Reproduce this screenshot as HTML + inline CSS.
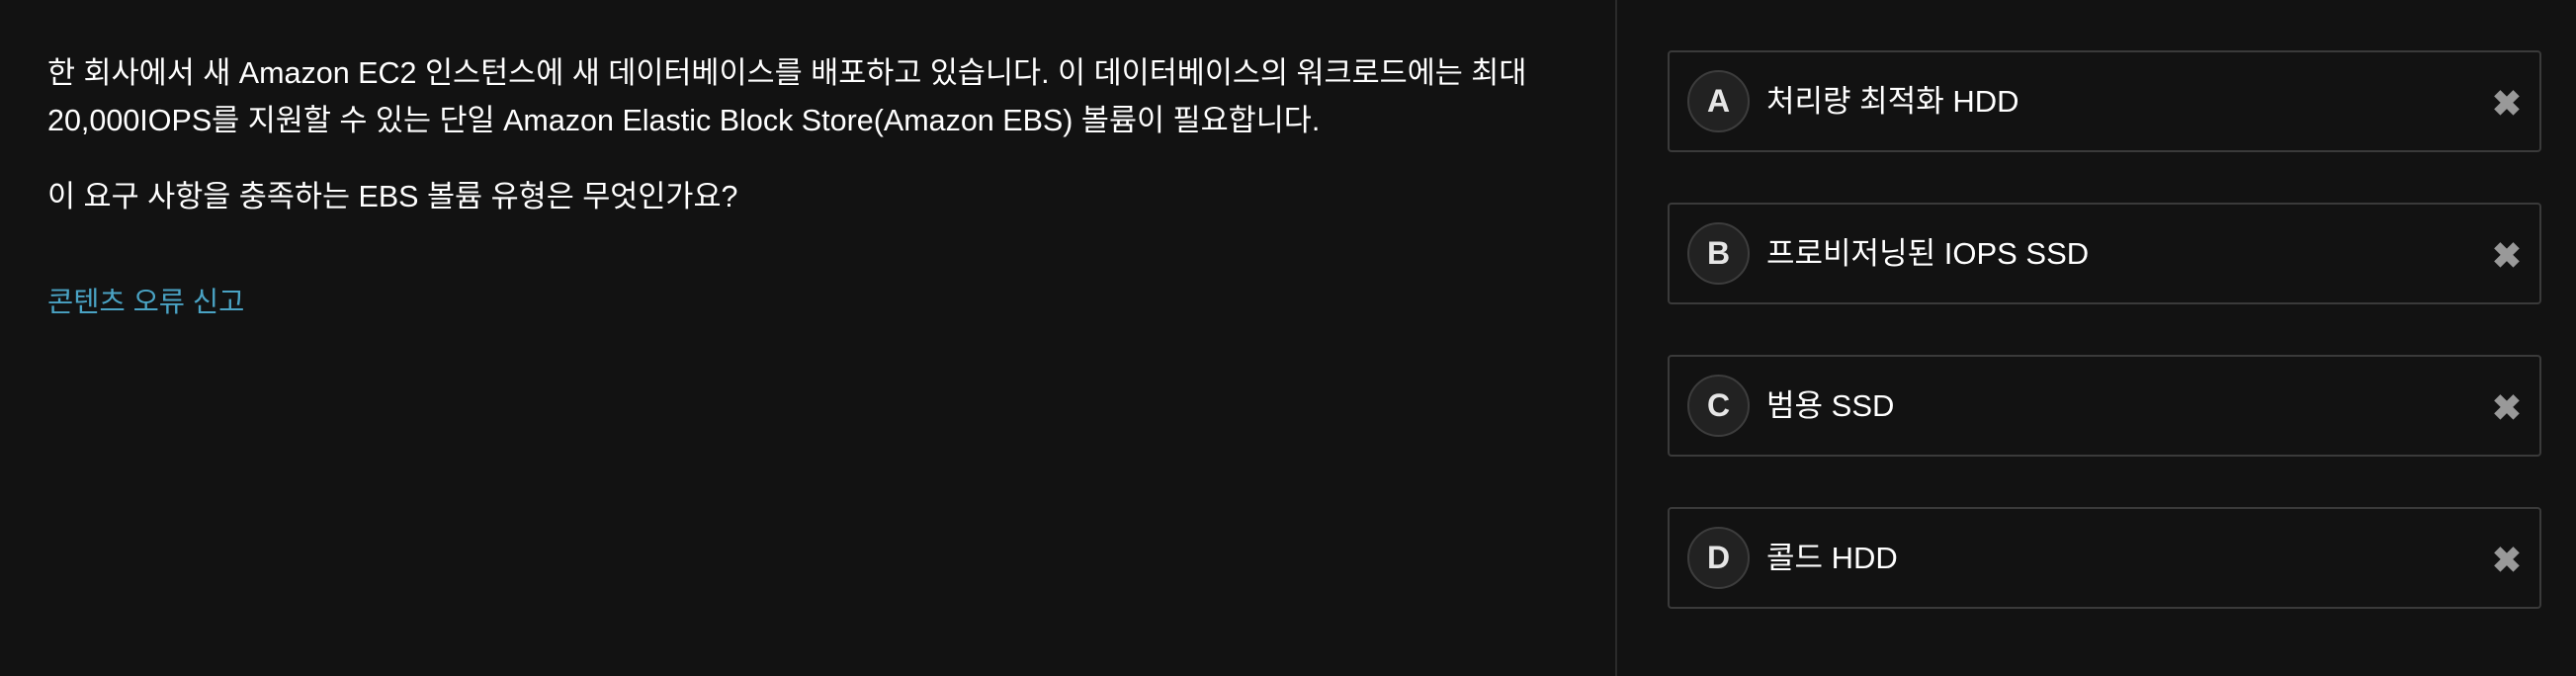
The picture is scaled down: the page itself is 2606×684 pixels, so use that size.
<!DOCTYPE html>
<html><head><meta charset="utf-8"><style>
html,body{margin:0;padding:0;background:#121212;width:2606px;height:684px;overflow:hidden;font-family:"Liberation Sans","Noto Sans CJK KR",sans-serif;color:#fff}
.left{position:absolute;left:48px;top:0;width:1560px}
.p{position:absolute;left:0;font-size:30.5px;white-space:nowrap;line-height:48px}
.div{position:absolute;left:1634px;top:0;width:2px;height:684px;background:#2a2a2a}
.opt{position:absolute;left:1687px;width:884px;height:103px;border:2px solid #3a3a3a;border-radius:4px;box-sizing:border-box}
.c{position:absolute;left:18px;top:18px;width:63px;height:63px;border-radius:50%;background:#222;border:2px solid #3d3d3d;box-sizing:border-box;color:#e6e6e6;font-size:32px;font-weight:bold;text-align:center;line-height:59px}
.t{position:absolute;left:98px;top:0;line-height:99px;font-size:31px}
.x{position:absolute;right:18px;top:2px;line-height:99px;font-size:36px;color:#999;font-weight:bold}
</style></head><body>
<div class="left">
<div class="p" style="top:50px">한 회사에서 새 Amazon EC2 인스턴스에 새 데이터베이스를 배포하고 있습니다. 이 데이터베이스의 워크로드에는 최대</div>
<div class="p" style="top:98px">20,000IOPS를 지원할 수 있는 단일 Amazon Elastic Block Store(Amazon EBS) 볼륨이 필요합니다.</div>
<div class="p" style="top:175px">이 요구 사항을 충족하는 EBS 볼륨 유형은 무엇인가요?</div>
<div class="p" style="top:282px;color:#4aa3c4;font-size:28.5px">콘텐츠 오류 신고</div>
</div>
<div class="div"></div>
<div class="opt" style="top:51px"><div class="c">A</div><div class="t">처리량 최적화 HDD</div><div class="x">✖</div></div>
<div class="opt" style="top:205px"><div class="c">B</div><div class="t">프로비저닝된 IOPS SSD</div><div class="x">✖</div></div>
<div class="opt" style="top:359px"><div class="c">C</div><div class="t">범용 SSD</div><div class="x">✖</div></div>
<div class="opt" style="top:513px"><div class="c">D</div><div class="t">콜드 HDD</div><div class="x">✖</div></div>
</body></html>
